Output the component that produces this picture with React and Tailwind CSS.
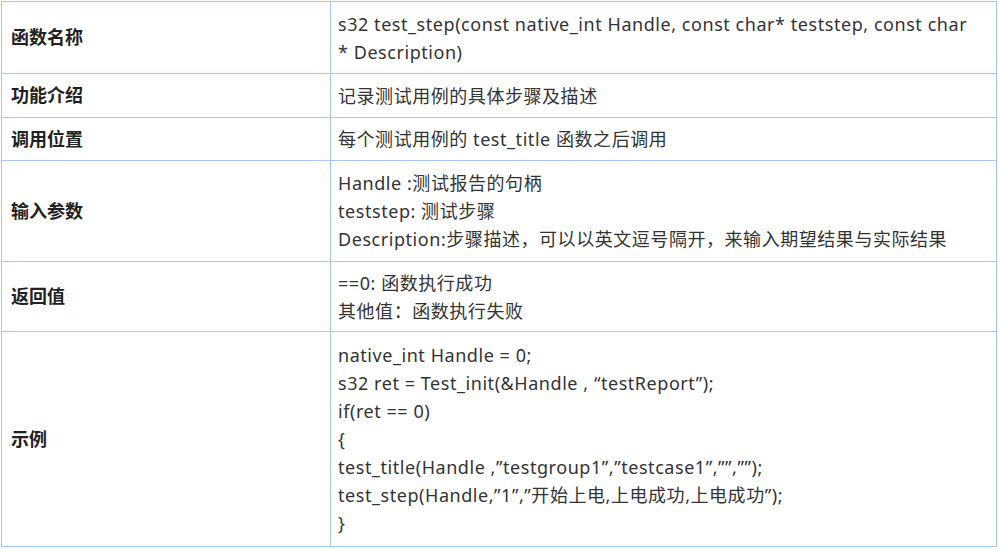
export default function App() {
  const font = { fontFamily: '"Noto Sans", "Noto Sans CJK SC", sans-serif' };
  const rows = [
    { label: '函数名称', h: 'h-[72px]', lines: ['s32 test_step(const native_int Handle, const char* teststep, const char', '* Description)'] },
    { label: '功能介绍', h: 'h-[44px]', lines: ['记录测试用例的具体步骤及描述'] },
    { label: '调用位置', h: 'h-[43px]', lines: ['每个测试用例的 test_title 函数之后调用'] },
    { label: '输入参数', h: 'h-[101px]', lines: ['Handle :测试报告的句柄', 'teststep: 测试步骤', 'Description:步骤描述，可以以英文逗号隔开，来输入期望结果与实际结果'] },
    { label: '返回值', h: 'h-[70px]', lines: ['==0: 函数执行成功', '其他值：函数执行失败'] },
    { label: '示例', h: 'h-[215px]', lines: ['native_int Handle = 0;', 's32 ret = Test_init(&Handle , “testReport”);', 'if(ret == 0)', '{', 'test_title(Handle ,”testgroup1”,”testcase1”,””,””);', 'test_step(Handle,”1”,”开始上电,上电成功,上电成功”);', '}'] },
  ];
  return (
    <div className="w-[999px] h-[549px] bg-white pt-px pl-px" style={font}>
      <table className="border-collapse w-[996px] table-fixed">
        <colgroup>
          <col className="w-[329px]" />
          <col />
        </colgroup>
        <tbody>
          {rows.map((r) => (
            <tr key={r.label} className={r.h}>
              <td className="border border-[#a9c6f2] pl-[9px] align-middle text-[18px] font-bold text-[#222]">{r.label}</td>
              <td className="border border-[#a9c6f2] pl-[7px] pr-1 align-middle text-[18px] leading-[28px] tracking-[0.55px] text-[#333]">
                {r.lines.map((l, i) => (
                  <div key={i} className="whitespace-pre">{l}</div>
                ))}
              </td>
            </tr>
          ))}
        </tbody>
      </table>
    </div>
  );
}
